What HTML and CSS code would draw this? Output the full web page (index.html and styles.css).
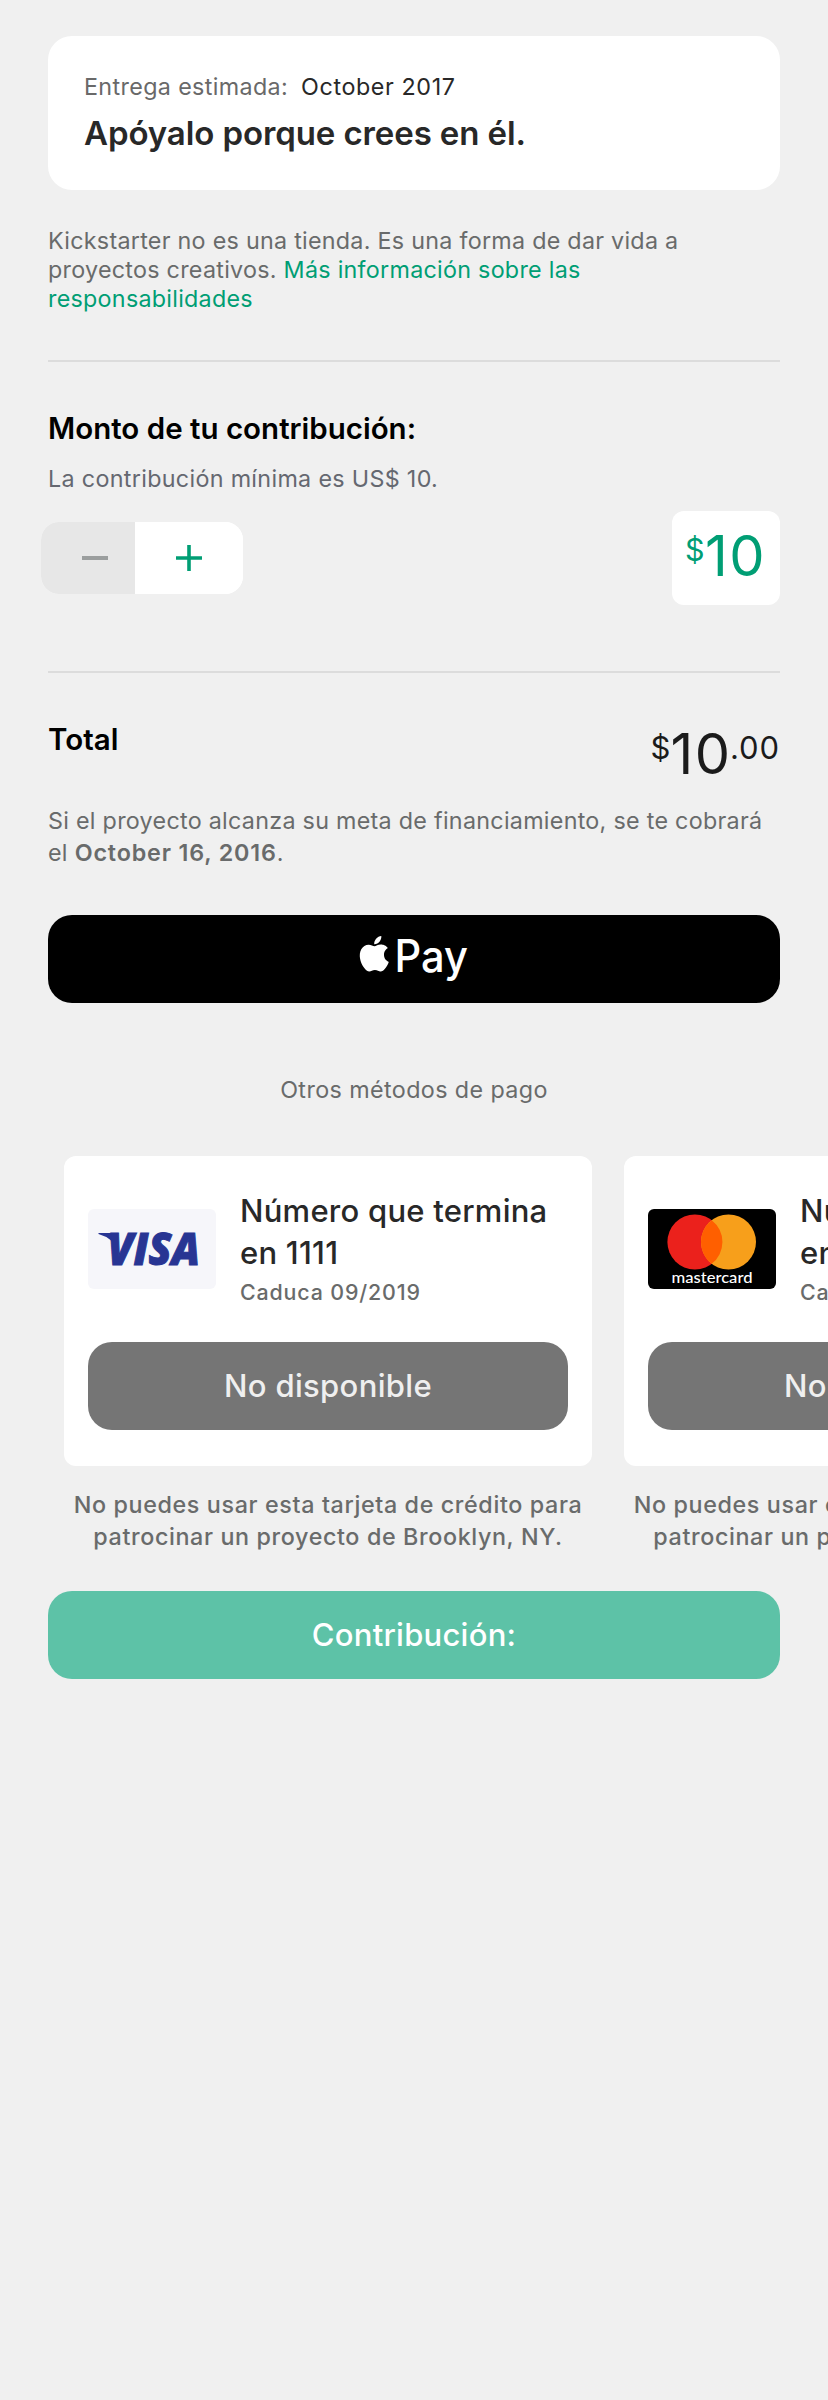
FILE: index.html
```html
<!DOCTYPE html>
<html lang="es">
<head>
<meta charset="utf-8">
<title>Contribución</title>
<link rel="stylesheet" href="styles.css">
</head>
<body>
<main class="page">
  <section class="reward">
    <p class="delivery"><span>Entrega estimada:</span> <span class="date">October 2017</span></p>
    <h1 class="reward-title">Apóyalo porque crees en él.</h1>
  </section>
  <p class="disclaimer">Kickstarter no es una tienda. Es una forma de dar vida a<br>proyectos creativos. <a class="link">Más información sobre las<br>responsabilidades</a></p>
  <hr class="rule">
  <section class="pledge">
    <h2 class="label">Monto de tu contribución:</h2>
    <p class="minimum">La contribución mínima es US$ 10.</p>
    <div class="pledge-row">
      <div class="stepper">
        <button class="step minus" aria-label="Menos"><svg width="28" height="28" viewBox="0 0 28 28"><path d="M1 14h26" stroke="#9b9e9e" stroke-width="4"/></svg></button>
        <button class="step plus" aria-label="Más"><svg width="28" height="28" viewBox="0 0 28 28"><path d="M1 14h26M14 1v26" stroke="#009e74" stroke-width="3.6"/></svg></button>
      </div>
      <div class="amount"><span class="sup">$</span><span class="big">10</span></div>
    </div>
  </section>
  <hr class="rule rule-total">
  <section class="total-row">
    <h2 class="label">Total</h2>
    <div class="total"><span class="sup">$</span><span class="big">10</span><span class="cents">.00</span></div>
  </section>
  <p class="charge">Si el proyecto alcanza su meta de financiamiento, se te cobrará<br>el <b>October 16, 2016</b>.</p>
  <button class="apple-pay" aria-label="Apple Pay">
    <svg class="apple-logo" width="110" height="50" viewBox="0 0 110 50"><g fill="#fff"><path transform="translate(-2.5 2) scale(1.48)" d="M12.152 6.896c-.948 0-2.415-1.078-3.96-1.04-2.04.027-3.91 1.183-4.961 3.014-2.117 3.675-.546 9.103 1.519 12.09 1.013 1.454 2.208 3.09 3.792 3.039 1.52-.065 2.09-.987 3.935-.987 1.831 0 2.35.987 3.96.948 1.637-.026 2.676-1.48 3.676-2.948 1.156-1.688 1.636-3.325 1.662-3.415-.039-.013-3.182-1.221-3.22-4.857-.026-3.04 2.48-4.494 2.597-4.559-1.429-2.09-3.623-2.324-4.39-2.376-2-.156-3.675 1.09-4.61 1.09zM15.53 3.83c.843-1.012 1.4-2.427 1.245-3.83-1.207.052-2.662.805-3.532 1.818-.78.896-1.454 2.338-1.273 3.714 1.338.104 2.715-.688 3.559-1.701"/><text class="pay" x="35.5" y="37.8" textLength="73.5" lengthAdjust="spacingAndGlyphs">Pay</text></g></svg>
  </button>
  <p class="others">Otros métodos de pago</p>
  <div class="methods">
    <article class="method">
      <div class="card">
        <header class="card-head">
          <svg class="logo" width="128" height="80" viewBox="0 0 128 80"><rect width="128" height="80" rx="6" fill="#f6f6fa"/><path d="M10.5 24H24q3 0 3.6 3l3 15Q25 29 10.5 25z" fill="#283593"/><text class="visa" x="19.5" y="55.5" textLength="92.5" lengthAdjust="spacingAndGlyphs">VISA</text></svg>
          <div><h3 class="card-title">Número que termina<br>en 1111</h3><p class="expiry">Caduca 09/2019</p></div>
        </header>
        <button class="unavailable">No disponible</button>
      </div>
      <p class="note">No puedes usar esta tarjeta de crédito para<br>patrocinar un proyecto de Brooklyn, NY.</p>
    </article>
    <article class="method">
      <div class="card">
        <header class="card-head">
          <svg class="logo" width="128" height="80" viewBox="0 0 128 80"><rect width="128" height="80" rx="6"/><circle cx="46.9" cy="33" r="27.5" fill="#eb211c"/><circle cx="80.5" cy="33" r="27.5" fill="#f79f1b"/><path d="M63.7 11.2a27.5 27.5 0 0 1 0 43.6a27.5 27.5 0 0 1 0-43.600z" fill="#ff5f00"/><text class="mc" x="23.5" y="74" textLength="81" lengthAdjust="spacingAndGlyphs">mastercard</text></svg>
          <div><h3 class="card-title">Número que termina<br>en 4444</h3><p class="expiry">Caduca 09/2019</p></div>
        </header>
        <button class="unavailable">No disponible</button>
      </div>
      <p class="note">No puedes usar esta tarjeta de crédito para<br>patrocinar un proyecto de Brooklyn, NY.</p>
    </article>
  </div>
  <button class="submit">Contribución:</button>
</main>
</body>
</html>
```
FILE: styles.css
```css
* { box-sizing: border-box; }
body { margin: 0; background: #f0f0f0; overflow-x: hidden; font-family: Inter, "Noto Sans", sans-serif; color: #282828; }
h1, h2, h3, p { margin: 0; font-weight: 600; }
p { font-weight: 400; white-space: nowrap; }
button { display: flex; align-items: center; justify-content: center; border: 0; padding: 0; font-family: inherit; }
.page { height: 2400px; overflow: hidden; padding: 36px 48px 0; }
.reward { height: 154px; padding: 35px 36px 0; border-radius: 24px; background: #fff; }
.delivery { font-size: 23.3px; line-height: 32px; letter-spacing: .36px; color: #696969; display: flex; gap: 13px; }
.date { color: #282828; letter-spacing: .6px; }
.reward-title { margin-top: 10px; font-size: 33px; line-height: 40px; letter-spacing: -.1px; }
.disclaimer { margin-top: 36px; font-size: 23.3px; line-height: 29px; letter-spacing: .27px; color: #696b6b; }
.link { color: #009e74; }
.rule { height: 2px; margin: 47px 0 48px; border: 0; background: #dcdcdc; }
.rule-total { margin-top: 66px; }
.label { font-size: 29.5px; line-height: 36px; color: #000; }
.minimum { margin-top: 19px; font-size: 23.3px; line-height: 28px; letter-spacing: .32px; color: #656870; }
.pledge-row { margin: 18px 0 0 -7px; height: 94px; display: flex; align-items: center; justify-content: space-between; }
.stepper { display: flex; width: 202px; height: 72px; border-radius: 18px; overflow: hidden; background: #fff; }
.step { height: 72px; background: #fff; }
.minus { width: 94px; padding-left: 14px; background: #e7e7e7; }
.plus { width: 108px; }
.amount { display: flex; width: 108px; height: 94px; padding-left: 13px; border-radius: 12px; background: #fff; color: #009e74; }
.sup { width: 20px; font-size: 30.5px; line-height: 77px; }
.big { font-size: 56px; line-height: 91px; letter-spacing: 1.5px; }
.total-row { display: flex; justify-content: space-between; height: 84px; }
.total { display: flex; color: #1b1b1b; }
.total .sup, .cents { font-size: 31px; line-height: 53px; }
.cents { margin-left: -1.5px; letter-spacing: .9px; }
.total .big { line-height: 67px; }
.charge { font-size: 23.3px; line-height: 32px; letter-spacing: .28px; color: #696b6b; }
.charge b { font-weight: 600; letter-spacing: .85px; }
.apple-pay { width: 100%; height: 88px; margin-top: 46px; border-radius: 24px; background: #000; }
.apple-logo { overflow: visible; }
.pay { font: 500 44.5px Inter, sans-serif; }
.others { margin-top: 71px; font-size: 23.3px; line-height: 32px; letter-spacing: .4px; text-align: center; color: #696b6b; }
.methods { display: flex; gap: 32px; margin: 50px -48px 0 16px; overflow: hidden; }
.method { flex: 0 0 528px; }
.card { height: 310px; padding: 34px 24px 0; border-radius: 12px; background: #fff; }
.card-head { display: flex; align-items: center; gap: 24px; height: 117px; }
.logo { flex: none; }
.visa { font: italic 800 43.5px "Open Sans", sans-serif; fill: #283593; stroke: #283593; stroke-width: 1px; }
.mc { font: 500 16px Lato, sans-serif; fill: #fff; }
.card-title { font-size: 31px; line-height: 42px; font-weight: 550; letter-spacing: .25px; white-space: nowrap; }
.expiry { margin: 4px 0 1px; font-size: 21.4px; line-height: 28px; font-weight: 500; letter-spacing: .85px; color: #696b6b; }
.unavailable { width: 480px; height: 88px; margin-top: 35px; padding-bottom: 2px; border-radius: 24px; background: #757575; color: #efefef; font-size: 31px; font-weight: 500; letter-spacing: .35px; }
.note { margin-top: 23px; font-size: 23.3px; line-height: 32px; font-weight: 500; letter-spacing: .63px; text-align: center; color: #696b6b; }
.submit { width: 100%; height: 88px; margin-top: 38px; padding-bottom: 2px; border-radius: 24px; background: #5dc2a7; color: #fff; font-size: 31px; font-weight: 500; letter-spacing: .25px; }
```
